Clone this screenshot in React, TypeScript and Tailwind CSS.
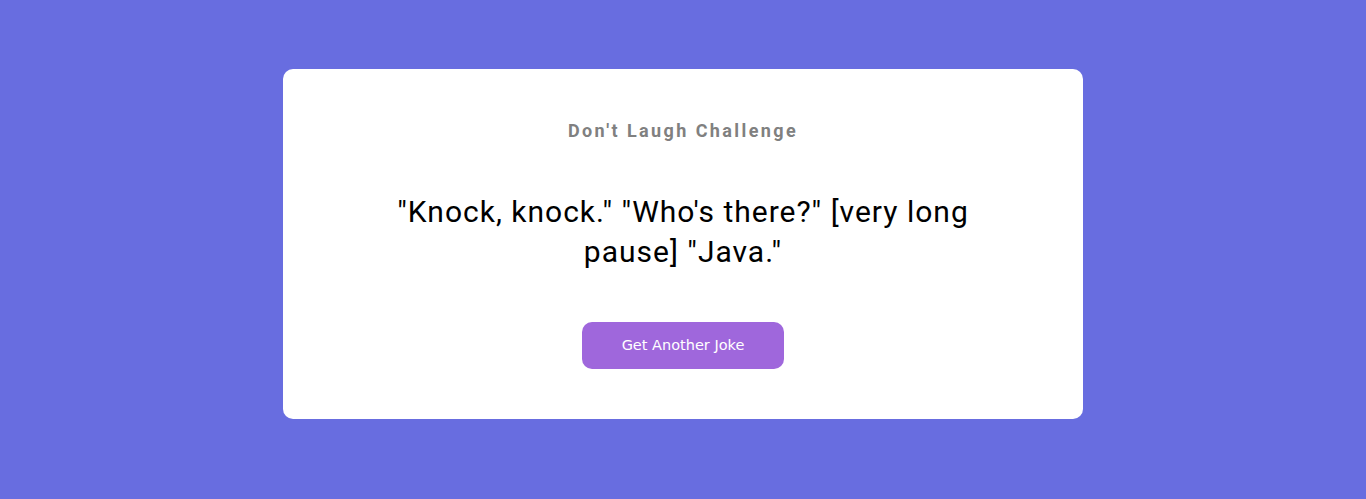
export default function App() {
    return (
        <div className="h-[499px] w-full bg-[#686de0] flex justify-center pt-[69px]">
            <div className="w-[800px] h-[350px] bg-white rounded-[10px] px-[100px] pt-[51px] pb-[50px] flex flex-col items-center text-center font-['Roboto',sans-serif]">
                <h3 className="text-[18px] leading-[22px] font-bold tracking-[2.4px] text-[#808080]">Don't Laugh Challenge</h3>
                <p className="mt-[50px] text-[30px] leading-[40px] text-black tracking-[1px]">
                    "Knock, knock." "Who's there?" [very long pause] "Java."
                </p>
                <button className="mt-[50px] w-[202px] h-[47px] rounded-[10px] bg-[#9f67dc] text-white text-[14.5px] font-['Tahoma','DejaVu_Sans',sans-serif]">
                    Get Another Joke
                </button>
            </div>
        </div>
    )
}
